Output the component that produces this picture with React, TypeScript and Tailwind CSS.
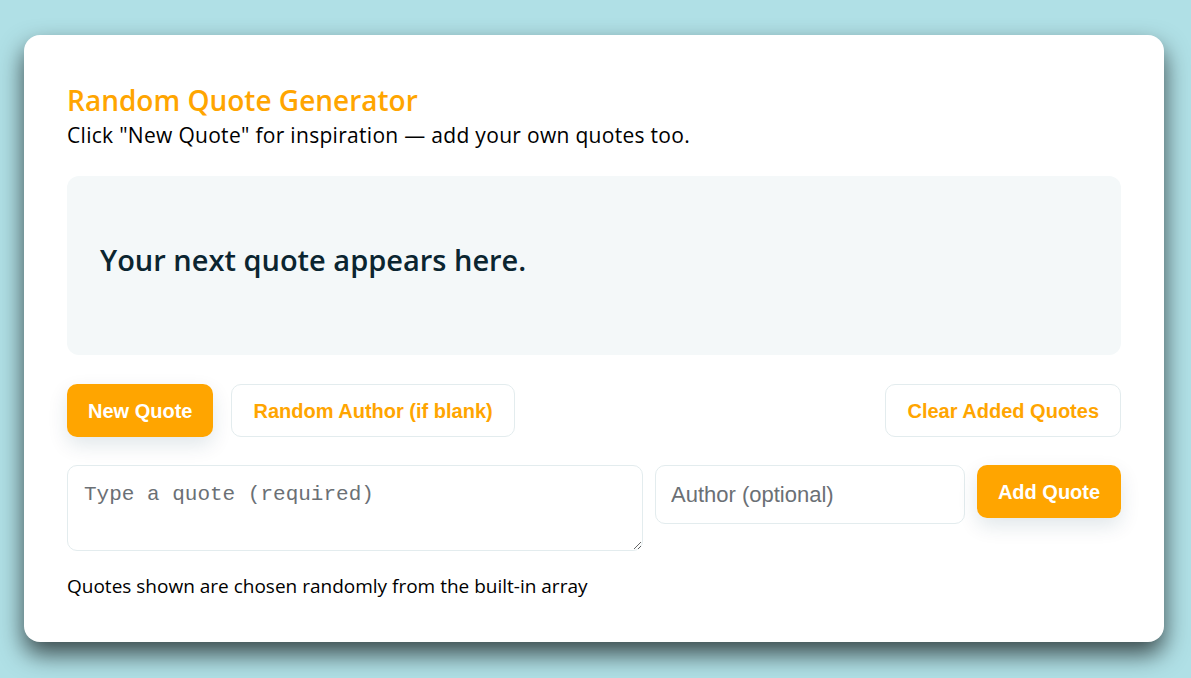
import { useState } from "react";

const quotes = [
    { text: "The best way to predict the future is to create it.", author: "Peter Drucker" },
    { text: "Simplicity is the soul of efficiency.", author: "Austin Freeman" },
    { text: "Make it work, make it right, make it fast.", author: "Kent Beck" },
];

export default function App() {
    const [quote, setQuote] = useState<{ text: string; author: string } | null>(null);
    const [text, setText] = useState("");
    const [author, setAuthor] = useState("");

    return (
        <div className="min-h-screen bg-[#b0e0e6] pl-6 pr-[27px] pt-[35px] pb-9 font-['Open_Sans',sans-serif]">
            <div className="bg-white rounded-2xl shadow-[0_12px_24px_rgba(0,0,0,0.68)] px-[43px] pt-[47px] pb-[43px]">
                <h1 className="text-[28px] font-semibold text-[#ffa500] leading-[36px]">Random Quote Generator</h1>
                <p className="text-[21px] tracking-[0.3px] text-black leading-[30px] mt-[2px]">
                    Click "New Quote" for inspiration — add your own quotes too.
                </p>

                <div className="mt-[26px] h-[179px] rounded-xl bg-[#f4f8f9] px-[33px] flex items-center">
                    <p className="text-[29px] font-semibold text-[#0b2530] leading-9 -mt-[12px]">
                        {quote ? `“${quote.text}” — ${quote.author}` : "Your next quote appears here."}
                    </p>
                </div>

                <div className="mt-[29px] flex items-center gap-[18px] font-['Liberation_Sans',Arial,sans-serif]">
                    <button
                        onClick={() => setQuote(quotes[Math.floor(Math.random() * quotes.length)])}
                        className="h-[53px] px-[21px] rounded-[10px] bg-[#ffa500] text-white font-bold text-[20px] shadow-[0_8px_20px_rgba(0,60,80,0.12)]"
                    >
                        New Quote
                    </button>
                    <button className="h-[53px] px-[21px] rounded-[10px] bg-white border border-[#e3ecee] text-[#ffa500] font-bold text-[20px]">
                        Random Author (if blank)
                    </button>
                    <button className="ml-auto h-[53px] px-[21px] rounded-[10px] bg-white border border-[#e3ecee] text-[#ffa500] font-bold text-[20px]">
                        Clear Added Quotes
                    </button>
                </div>

                <div className="mt-[28px] flex items-start gap-3">
                    <textarea
                        value={text}
                        onChange={(e) => setText(e.target.value)}
                        placeholder="Type a quote (required)"
                        className="flex-1 h-[86px] rounded-[10px] border border-[#e3ecee] px-4 py-[15px] text-[21px] leading-[28px] font-['Liberation_Mono',monospace] placeholder:text-[#6b7075] outline-none"
                    />
                    <input
                        value={author}
                        onChange={(e) => setAuthor(e.target.value)}
                        placeholder="Author (optional)"
                        className="w-[310px] h-[59px] rounded-[10px] border border-[#e3ecee] px-[15px] text-[22px] font-['Liberation_Sans',Arial,sans-serif] placeholder:text-[#6b7075] outline-none"
                    />
                    <button className="w-[144px] h-[53px] rounded-[10px] bg-[#ffa500] text-white font-bold text-[20px] font-['Liberation_Sans',Arial,sans-serif] shadow-[0_8px_20px_rgba(0,60,80,0.12)]">
                        Add Quote
                    </button>
                </div>

                <p className="mt-[22px] text-[19px] text-black leading-[26px]">
                    Quotes shown are chosen randomly from the built-in array
                </p>
            </div>
        </div>
    );
}
